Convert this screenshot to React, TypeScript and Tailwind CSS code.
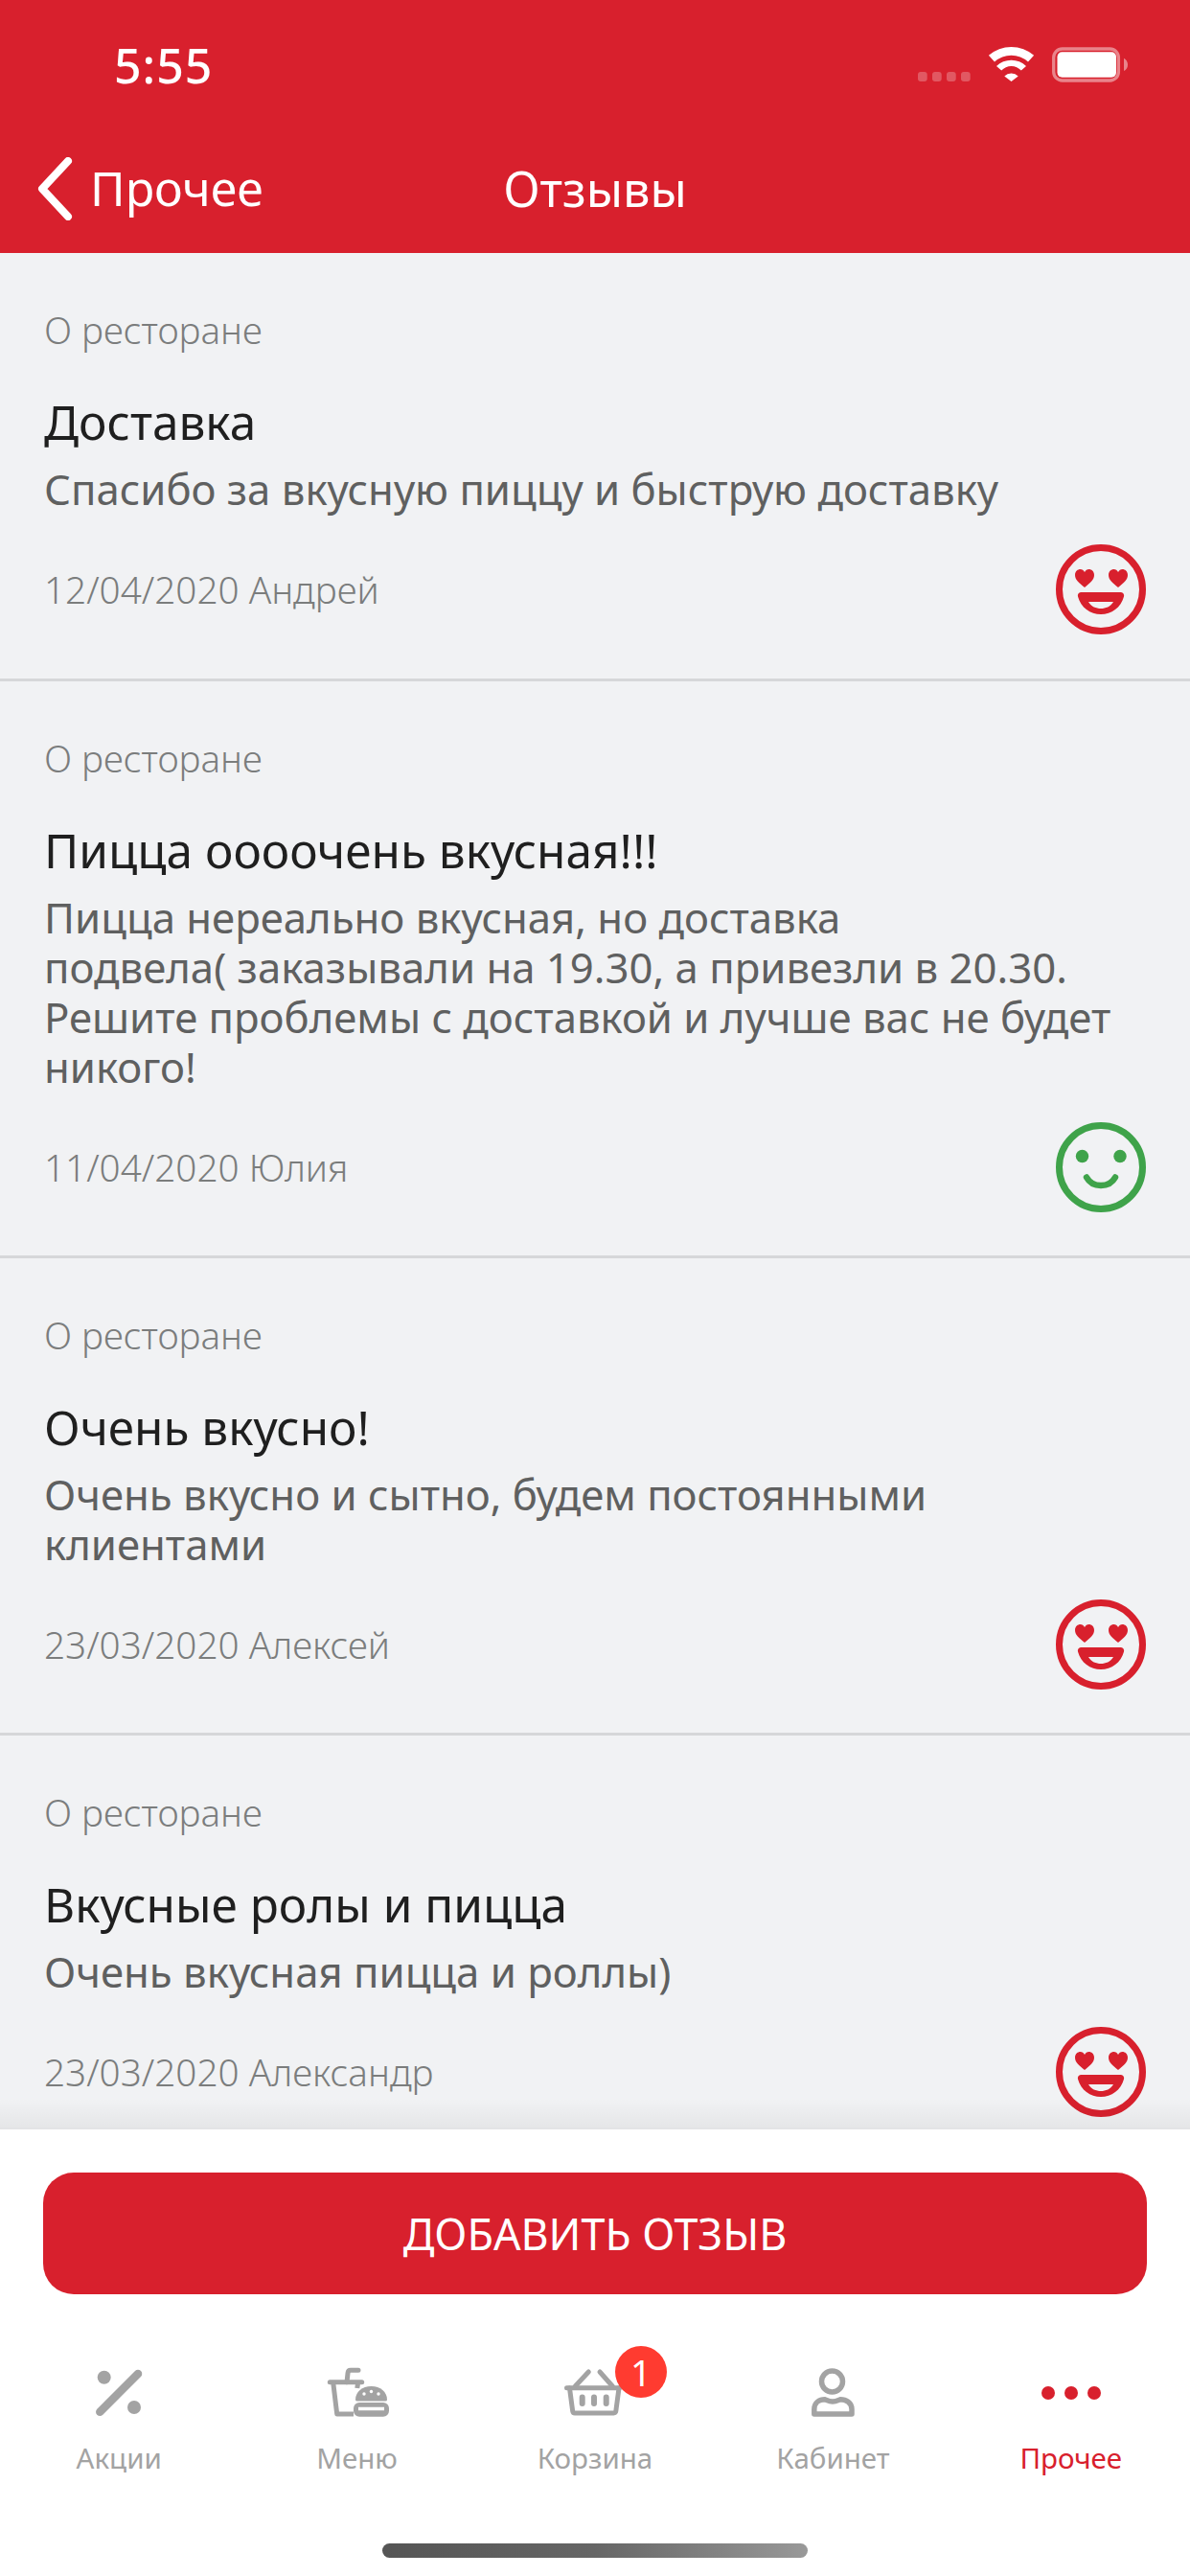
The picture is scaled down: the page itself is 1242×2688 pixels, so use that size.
const reviews = [
  {
    title: "Доставка",
    text: "Спасибо за вкусную пиццу и быструю доставку",
    meta: "12/04/2020 Андрей",
    mood: "love",
  },
  {
    title: "Пицца оооочень вкусная!!!",
    text: "Пицца нереально вкусная, но доставка\nподвела( заказывали на 19.30, а привезли в 20.30. Решите проблемы с доставкой и лучше вас не будет никого!",
    meta: "11/04/2020 Юлия",
    mood: "smile",
  },
  {
    title: "Очень вкусно!",
    text: "Очень вкусно и сытно, будем постоянными клиентами",
    meta: "23/03/2020 Алексей",
    mood: "love",
  },
  {
    title: "Вкусные ролы и пицца",
    text: "Очень вкусная пицца и роллы)",
    meta: "23/03/2020 Александр",
    mood: "love",
  },
];

function LoveFace() {
  const heart =
    "M30 45C24 40 20 37 20 32C20 28 23 26 25.5 26C27.5 26 29 27 30 29C31 27 32.5 26 34.5 26C37 26 40 28 40 32C40 37 36 40 30 45Z";
  return (
    <svg width="94" height="94" viewBox="0 0 94 94" className="shrink-0 text-[#d8202d]">
      <circle cx="47" cy="47" r="43.5" fill="none" stroke="currentColor" strokeWidth="7" />
      <path d={heart} fill="currentColor" />
      <path d={heart} fill="currentColor" transform="translate(35 0)" />
      <path
        fillRule="evenodd"
        fill="currentColor"
        d="M26 50H68A3.5 3.5 0 0 1 71 54.5C68 66 58 73 47 73C36 73 26 66 23 54.5A3.5 3.5 0 0 1 26 50ZM34 60H60C57 65 52 67 47 67C42 67 37 65 34 60Z"
      />
    </svg>
  );
}

function SmileFace() {
  return (
    <svg width="94" height="94" viewBox="0 0 94 94" className="shrink-0 text-[#3fa34a]">
      <circle cx="47" cy="47" r="43.5" fill="none" stroke="currentColor" strokeWidth="7" />
      <circle cx="27.5" cy="35.5" r="6.7" fill="currentColor" />
      <circle cx="67" cy="35.5" r="6.7" fill="currentColor" />
      <path
        d="M32 57.5C35 63 40 66 47 66C54 66 59 63 62 57.5"
        fill="none"
        stroke="currentColor"
        strokeWidth="6.5"
        strokeLinecap="round"
      />
    </svg>
  );
}

function PercentIcon() {
  return (
    <svg width="80" height="56" viewBox="0 0 80 56" fill="#a3a3a3">
      <circle cx="24.7" cy="11.7" r="7" />
      <circle cx="56" cy="43" r="7" />
      <path d="M20.3 47.7L60 8" stroke="#a3a3a3" strokeWidth="8.5" strokeLinecap="round" />
    </svg>
  );
}

function MenuIcon() {
  return (
    <svg width="80" height="56" viewBox="0 0 80 56" fill="none" stroke="#a3a3a3">
      <path d="M11.3 16.7H44.7" strokeWidth="5" strokeLinecap="round" />
      <path d="M29 16.7L30 7.5Q30.3 4.3 33 4.3H41" strokeWidth="5" strokeLinecap="round" />
      <path d="M14.7 17L18.7 50H36" strokeWidth="5" strokeLinejoin="round" />
      <path d="M40.7 17L39.8 23" strokeWidth="5" />
      <path
        d="M38 35C38 27 45 21 54.5 21C64 21 71 27 71 35Q71 36.5 69 36.5H40Q38 36.5 38 35Z"
        fill="#a3a3a3"
        stroke="none"
      />
      <circle cx="47" cy="29" r="1.7" fill="#fff" stroke="none" />
      <circle cx="54.5" cy="26.5" r="1.7" fill="#fff" stroke="none" />
      <circle cx="62" cy="29" r="1.7" fill="#fff" stroke="none" />
      <rect x="36" y="38" width="37" height="14.7" rx="6" fill="#a3a3a3" stroke="none" />
      <path d="M41 44.5H68" stroke="#fff" strokeWidth="3.5" />
    </svg>
  );
}

function BasketIcon() {
  return (
    <svg width="80" height="56" viewBox="0 0 80 56" fill="none" stroke="#a3a3a3" strokeLinecap="round">
      <path d="M10.5 22.7H65.5" strokeWidth="5" />
      <path d="M13.5 23L16.7 47Q17 49 19 49H59.5Q61.5 49 61.8 47L65 23" strokeWidth="5" />
      <path d="M26.7 32.5V39M39 32.5V39M51.7 32.5V39" strokeWidth="6" />
      <path d="M19.3 21L33.3 6M45 6L58.3 21" strokeWidth="5" />
    </svg>
  );
}

function PersonIcon() {
  return (
    <svg width="80" height="56" viewBox="0 0 80 56" fill="none" stroke="#a3a3a3" strokeWidth="5.5">
      <circle cx="39.5" cy="16" r="11" />
      <path
        strokeLinejoin="round"
        d="M20.8 50V45C20.8 38 26 34.8 32 34.8C35 36 37 37 40 37C43 37 45 36 48 34.8C54 34.8 60 38 60 45V50Z"
      />
    </svg>
  );
}

function DotsIcon() {
  return (
    <svg width="80" height="56" viewBox="0 0 80 56" fill="#d8202d">
      <circle cx="16" cy="28" r="7" />
      <circle cx="40" cy="28" r="7" />
      <circle cx="64" cy="28" r="7" />
    </svg>
  );
}

const tabs = [
  { label: "Акции", Icon: PercentIcon },
  { label: "Меню", Icon: MenuIcon },
  { label: "Корзина", Icon: BasketIcon, badge: 1 },
  { label: "Кабинет", Icon: PersonIcon },
  { label: "Прочее", Icon: DotsIcon, active: true },
];

export default function App() {
  return (
    <div className="flex h-[2688px] w-[1242px] flex-col overflow-hidden bg-[#f1f2f4] font-['Noto_Sans',sans-serif]">
      {/* status bar + nav */}
      <header className="h-[264px] shrink-0 bg-[#d8202d] text-white">
        <div className="flex h-[136px] items-start justify-between pt-[40px] pr-[65px] pl-[119px]">
          <span className="text-[50px] leading-[56px] font-medium tracking-[1px]">5:55</span>
          <svg width="220" height="40" viewBox="0 0 220 40" className="mt-[8px]">
            <g fill="#fff" opacity="0.25">
              <rect x="1" y="27" width="9.7" height="10" rx="3" />
              <rect x="16" y="27" width="9.7" height="10" rx="3" />
              <rect x="31" y="27" width="9.7" height="10" rx="3" />
              <rect x="46" y="27" width="9.7" height="10" rx="3" />
            </g>
            <g fill="#fff">
              <path d="M74.9 9.8A36 36 0 0 1 122.1 9.8L116 16.5A26 26 0 0 0 81 16.5Z" />
              <path d="M83 21A22.3 22.3 0 0 1 114 21L108.8 25.5A14 14 0 0 0 88.2 25.5Z" />
              <path d="M98.5 37L91.3 31.5A10 10 0 0 1 105.7 31.5Z" />
            </g>
            <rect x="142.7" y="3" width="67.7" height="33" rx="9" fill="none" stroke="#fff" strokeOpacity="0.45" strokeWidth="3.3" />
            <rect x="146.5" y="6.3" width="61.5" height="26.4" rx="5" fill="#fff" />
            <path d="M216 12.7V26C218.5 25 220 22.5 220 19.5C220 16.5 218.5 14 216 12.7Z" fill="#fff" fillOpacity="0.45" />
          </svg>
        </div>
        <div className="relative flex h-[124px] items-start">
          <div className="flex items-center gap-[17px] pt-[28px] pl-[38px]">
            <svg width="39" height="66" viewBox="0 0 39 66" fill="none">
              <path d="M33 4L6 33L33 62" stroke="#fff" strokeWidth="8" strokeLinecap="round" strokeLinejoin="round" />
            </svg>
            <span className="-mt-[2px] text-[50px] leading-[60px]">Прочее</span>
          </div>
          <span className="absolute top-[31px] right-0 left-0 text-center text-[50.5px] leading-[60px]">Отзывы</span>
        </div>
      </header>

      {/* reviews list */}
      <main className="min-h-0 flex-1 overflow-hidden">
        {reviews.map((r) => (
          <article
            key={r.title}
            className="border-b-[3px] border-[#d6d7d9] px-[46px] pt-[54px] pb-[45px] first:pb-[46px]"
          >
            <div className="text-[38.6px] leading-[52px] font-light text-[#7b7d7d]">О ресторане</div>
            <h2 className="mt-[40px] text-[49.5px] leading-[60px] font-normal text-[#1f1f1f]">{r.title}</h2>
            <p className="mt-[14px] text-[43.7px] leading-[52px] whitespace-pre-line text-[#5f6060]">{r.text}</p>
            <div className="mt-[32px] flex items-center justify-between">
              <span className="text-[38.7px] leading-[52px] font-light text-[#7b7d7d]">{r.meta}</span>
              {r.mood === "love" ? <LoveFace /> : <SmileFace />}
            </div>
          </article>
        ))}
      </main>

      {/* bottom panel */}
      <footer className="relative h-[468px] shrink-0 border-t-[2px] border-[#e3e4e6] bg-white">
        <div className="absolute top-[-32px] right-0 left-0 h-[30px] bg-gradient-to-b from-transparent to-black/5" />
        <div className="px-[45px] pt-[45px]">
          <button className="h-[127px] w-full rounded-[32px] bg-[#d8202d] text-[44.8px] text-white">
            ДОБАВИТЬ ОТЗЫВ
          </button>
        </div>
        <nav className="mt-[75px] grid grid-cols-5">
          {tabs.map((t) => (
            <div key={t.label} className="relative flex flex-col items-center">
              <t.Icon />
              {t.badge && (
                <span className="absolute top-[-21px] left-[145px] flex h-[54px] w-[54px] items-center justify-center rounded-full bg-[#ff3b30] text-[38px] leading-none text-white">
                  {t.badge}
                </span>
              )}
              <span
                className={`mt-[22px] text-[29.5px] leading-[36px] ${t.active ? "text-[#d8202d]" : "text-[#a3a3a3]"}`}
              >
                {t.label}
              </span>
            </div>
          ))}
        </nav>
        <div className="mx-auto mt-[71px] h-[15px] w-[444px] rounded-full bg-gradient-to-r from-[#555] via-[#666] to-[#999]" />
      </footer>
    </div>
  );
}
